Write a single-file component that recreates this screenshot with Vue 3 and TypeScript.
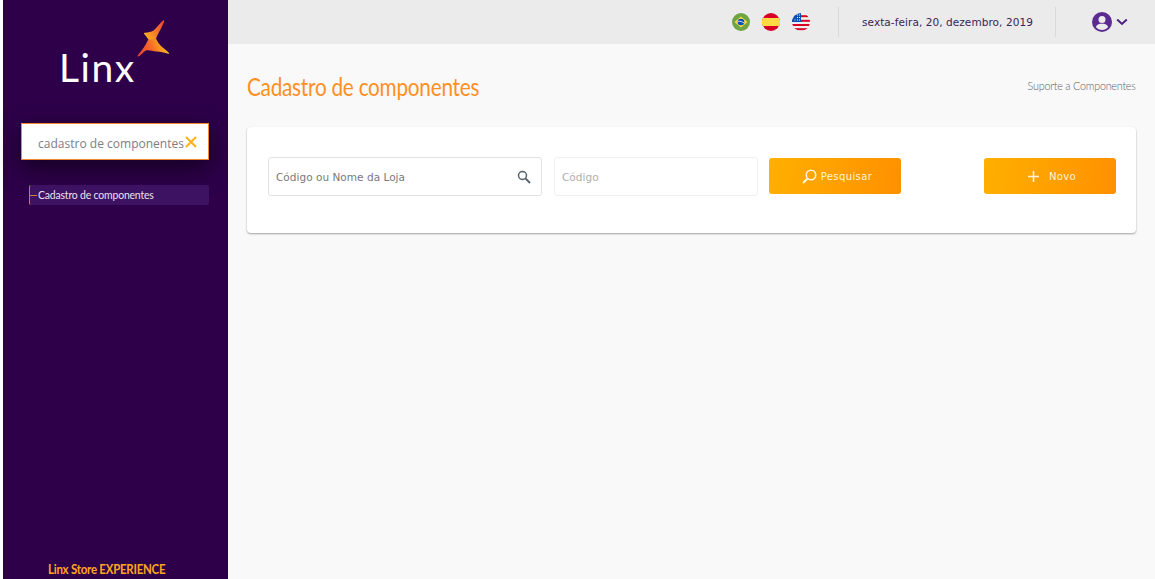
<script setup lang="ts">
const title: string = 'Cadastro de componentes'
</script>

<template>
  <div class="page">
    <aside class="sidebar">
      <div class="logo">
        <span class="logo-word">Linx</span>
        <svg class="logo-star" width="36" height="42" viewBox="0 0 36 42">
          <defs>
            <linearGradient id="starGrad" gradientUnits="userSpaceOnUse" x1="4" y1="38" x2="33" y2="26">
              <stop offset="0" stop-color="#ea3f2c" />
              <stop offset="0.45" stop-color="#f4672a" />
              <stop offset="0.8" stop-color="#fba51f" />
              <stop offset="1" stop-color="#ffc21d" />
            </linearGradient>
            <linearGradient id="topGrad" gradientUnits="userSpaceOnUse" x1="9" y1="17" x2="28" y2="4">
              <stop offset="0" stop-color="#fdb020" />
              <stop offset="0.5" stop-color="#f4762a" />
              <stop offset="1" stop-color="#ec4a2c" />
            </linearGradient>
          </defs>
          <path fill="url(#starGrad)" d="M13.500 21 C15 19 18 18.500 20.800 20 C22 23 24 26 26 28 C28.500 30.500 32 32.500 34 35 C34.500 36 33.500 36 32.500 35.500 C29 34.500 25.500 33.800 21.500 33.500 C18 33.200 14.500 32 11.500 32.300 C8.500 33.500 6 37.500 3.500 38.500 C2.500 38.700 2.500 37.800 3 37 C7 32 11 27 13.500 21 Z" />
          <path fill="url(#topGrad)" d="M28 2.500 C29 1.800 29.500 2.800 29 4 C27 9 24.500 13 22.500 17 C22 18.500 21.500 19.500 20.800 20.500 C18 21 15.500 21.500 13.500 21.500 C12 19.500 10.500 17.500 9 15.800 C8.700 15 9.200 14.800 10 14.800 C13 14.500 16 14 18.500 12.500 C22 9.500 25 5 28 2.500 Z" />
        </svg>
      </div>
      <div class="side-search">
        <span class="side-search-text">cadastro de componentes</span>
        <svg class="side-x" width="12" height="12" viewBox="0 0 12 12"><path d="M1 1 L11 11 M11 1 L1 11" stroke="#ffb11a" stroke-width="2" fill="none" /></svg>
      </div>
      <div class="menu-item">
        <span class="menu-tick"></span>
        <span class="menu-label">{{ title }}</span>
      </div>
      <div class="side-footer"><span class="footer-label">Linx Store EXPERIENCE</span></div>
    </aside>

    <div class="main">
      <header class="topbar">
        <div class="flags">
          <svg width="18" height="18" viewBox="0 0 18 18">
            <circle cx="9" cy="9" r="9" fill="#6da544" />
            <path d="M9 3.500 L15.500 9 L9 14.500 L2.500 9 Z" fill="#ffda44" />
            <circle cx="9" cy="9" r="3.300" fill="#0052b4" />
            <path d="M6 8.300 C8 8 10.500 8.700 12 10" stroke="#f0f0f0" stroke-width="0.900" fill="none" />
          </svg>
          <svg width="18" height="18" viewBox="0 0 18 18">
            <circle cx="9" cy="9" r="9" fill="#d80027" />
            <path d="M0.900 5 H17.100 A9 9 0 0 1 17.100 13 H0.900 A9 9 0 0 1 0.900 5 Z" fill="#ffda44" />
          </svg>
          <svg width="18" height="18" viewBox="0 0 18 18">
            <clipPath id="usClip"><circle cx="9" cy="9" r="9" /></clipPath>
            <g clip-path="url(#usClip)">
              <rect width="18" height="18" fill="#f0f0f0" />
              <rect y="2.200" width="18" height="2" fill="#d80027" />
              <rect y="6.800" width="18" height="2" fill="#d80027" />
              <rect y="11" width="18" height="2" fill="#d80027" />
              <rect y="15.200" width="18" height="2" fill="#d80027" />
              <rect width="9" height="9" fill="#0052b4" />
              <path d="M2.500 7 h1 M5 7 h1 M7 7 h1 M5 4.500 h1 M7 4.500 h1 M7 2 h1 M5 2 h1" stroke="#f0f0f0" stroke-width="1" />
            </g>
          </svg>
        </div>
        <div class="date">sexta-feira, 20, dezembro, 2019</div>
        <div class="user">
          <svg width="20" height="20" viewBox="0 0 20 20">
            <circle cx="10" cy="10" r="10" fill="#5b2a91" />
            <circle cx="10" cy="7.500" r="3.500" fill="#ebebeb" />
            <path d="M3.800 15 C5 12.300 7.500 11.800 10 11.800 C12.500 11.800 15 12.300 16.200 15 C14.500 17 12.500 18 10 18 C7.500 18 5.500 17 3.800 15 Z" fill="#ebebeb" />
          </svg>
          <svg width="12" height="8" viewBox="0 0 12 8"><path d="M1.200 1.500 L6 6 L10.800 1.500" stroke="#4b2180" stroke-width="2" fill="none" /></svg>
        </div>
      </header>

      <main class="content">
        <div class="title-row">
          <h1 class="title">{{ title }}</h1>
          <a class="support">Suporte a Componentes</a>
        </div>
        <section class="card">
          <div class="field field-main">
            <span>Código ou Nome da Loja</span>
            <svg width="14" height="14" viewBox="0 0 14 14"><circle cx="5.500" cy="5.500" r="4" stroke="#55606a" stroke-width="1.500" fill="none" /><path d="M8.500 8.500 L13 13" stroke="#55606a" stroke-width="1.800" /></svg>
          </div>
          <div class="field field-code"><span>Código</span></div>
          <button class="btn btn-search">
            <svg width="15" height="15" viewBox="0 0 15 15"><circle cx="9" cy="6" r="4.700" stroke="#fff3dd" stroke-width="1.600" fill="none" /><path d="M5.500 9.500 L1 14" stroke="#fff3dd" stroke-width="2" /></svg>
            <span>Pesquisar</span>
          </button>
          <button class="btn btn-new">
            <svg width="13" height="13" viewBox="0 0 13 13"><path d="M6.500 1 V12 M1 6.500 H12" stroke="#fff3dd" stroke-width="1.600" /></svg>
            <span>Novo</span>
          </button>
        </section>
      </main>
    </div>
  </div>
</template>

<style>
html, body { margin: 0; background: #fff; }
</style>

<style scoped>
.page {
  display: flex;
  height: 579px;
  padding-left: 3px;
  box-sizing: border-box;
  overflow: hidden;
  font-family: "DejaVu Sans", sans-serif;
}
.sidebar {
  width: 225px;
  flex: none;
  background: #2d0049;
  display: flex;
  flex-direction: column;
  box-sizing: border-box;
  padding: 0 18px;
}
.logo {
  height: 123px;
  display: flex;
  align-items: flex-start;
  box-sizing: border-box;
  padding: 18px 0 0 38px;
}
.logo-word {
  font-family: "Lato", sans-serif;
  font-weight: 400;
  font-size: 39px;
  line-height: 46px;
  letter-spacing: 1.500px;
  color: #fff;
  width: 76px;
  flex: none;
  margin-top: 26px;
}
.logo-star {
  flex: none;
}
.side-search {
  height: 37px;
  width: 188px;
  box-sizing: border-box;
  border: 1px solid #f5882a;
  background: #fff;
  display: flex;
  align-items: center;
  padding: 1px 0 0 16px;
  box-shadow: 0 8px 24px rgba(0, 0, 0, 0.55);
}
.side-search-text {
  font-family: "Open Sans", sans-serif;
  font-size: 13px;
  color: #7d7d85;
  white-space: nowrap;
  width: 146px;
  flex: none;
  transform: scaleX(0.925);
  transform-origin: left center;
  margin-top: 1px;
}
.side-x {
  flex: none;
  margin-left: 1px;
}
.menu-item {
  margin: 25px 0 0 8px;
  width: 180px;
  height: 20px;
  background: #3d1262;
  border-radius: 2px;
  display: flex;
  align-items: center;
  font-family: "Lato", sans-serif;
  font-size: 12px;
  letter-spacing: -0.2px;
  color: #e8e0ee;
  box-sizing: border-box;
  border-left: 1px solid #c9812a;
  white-space: nowrap;
}
.menu-label {
  display: inline-block;
  transform: scaleX(0.87);
  transform-origin: left center;
  margin-top: -1px;
}
.menu-tick {
  width: 7px;
  height: 1px;
  background: #c9812a;
  flex: none;
  margin-right: 1px;
}
.side-footer {
  margin-top: auto;
  margin-bottom: 1px;
  margin-left: 27px;
  font-family: "Lato", sans-serif;
  font-size: 14px;
  line-height: 18px;
  font-weight: 700;
  letter-spacing: -0.3px;
  color: #ffa51f;
  white-space: nowrap;
}
.footer-label {
  display: inline-block;
  transform: scaleX(0.82);
  transform-origin: left center;
}
.main {
  flex: 1;
  min-width: 0;
  display: flex;
  flex-direction: column;
  background: #f9f9f9;
}
.topbar {
  height: 44px;
  flex: none;
  background: #ebebeb;
  display: flex;
  align-items: center;
  padding-left: 504px;
  box-sizing: border-box;
}
.flags {
  display: flex;
  gap: 12px;
  align-items: center;
  width: 107px;
  height: 30px;
  box-sizing: border-box;
  border-right: 1px solid #d9d9d9;
}
.date {
  height: 30px;
  line-height: 30px;
  width: 217px;
  box-sizing: border-box;
  padding-left: 23px;
  border-right: 1px solid #d9d9d9;
  font-size: 10.500px;
  letter-spacing: 0.07px;
  color: #3d2358;
  white-space: nowrap;
}
.user {
  display: flex;
  align-items: center;
  gap: 4px;
  padding-left: 36px;
}
.content {
  flex: 1;
  box-sizing: border-box;
  padding: 0 19px;
}
.title-row {
  height: 83px;
  display: flex;
  align-items: center;
  justify-content: space-between;
}
.title {
  margin: 0;
  font-family: "Lato", sans-serif;
  font-weight: 400;
  font-size: 25px;
  letter-spacing: -0.3px;
  color: #ff8f1f;
  white-space: nowrap;
  transform: scaleX(0.83);
  transform-origin: left center;
}
.support {
  font-family: "Lato", sans-serif;
  font-weight: 300;
  font-size: 12.500px;
  letter-spacing: -0.25px;
  color: #5e5e68;
  white-space: nowrap;
  transform: scaleX(0.86);
  transform-origin: right center;
}
.card {
  height: 106px;
  background: #fff;
  border-radius: 4px;
  box-shadow: 0 1px 2px rgba(0, 0, 0, 0.35);
  display: flex;
  align-items: flex-start;
  box-sizing: border-box;
  padding: 30px 20px 0 21px;
}
.field {
  height: 39px;
  box-sizing: border-box;
  border-radius: 3px;
  display: flex;
  align-items: center;
  justify-content: space-between;
  font-size: 10.500px;
  letter-spacing: 0.03px;
}
.field-main {
  width: 274px;
  border: 1px solid #e3e3e3;
  padding: 1px 10px 0 7px;
  color: #7a7a7a;
}
.field-code {
  width: 204px;
  margin-left: 12px;
  border: 1px solid #f0f0f0;
  padding: 1px 7px 0;
  color: #aeaeae;
}
.btn {
  height: 36px;
  width: 132px;
  margin-top: 1px;
  border: none;
  border-radius: 3px;
  background: linear-gradient(100deg, #ffb000 0%, #ff9000 100%);
  color: #fff3dd;
  display: flex;
  align-items: center;
  justify-content: center;
  font-family: "DejaVu Sans", sans-serif;
  font-size: 10px;
  letter-spacing: 0.4px;
  padding: 0;
}
.btn-search {
  margin-left: 11px;
  gap: 4px;
  padding-left: 4px;
}
.btn-new {
  margin-left: auto;
  gap: 9px;
  padding-left: 3px;
}
</style>
